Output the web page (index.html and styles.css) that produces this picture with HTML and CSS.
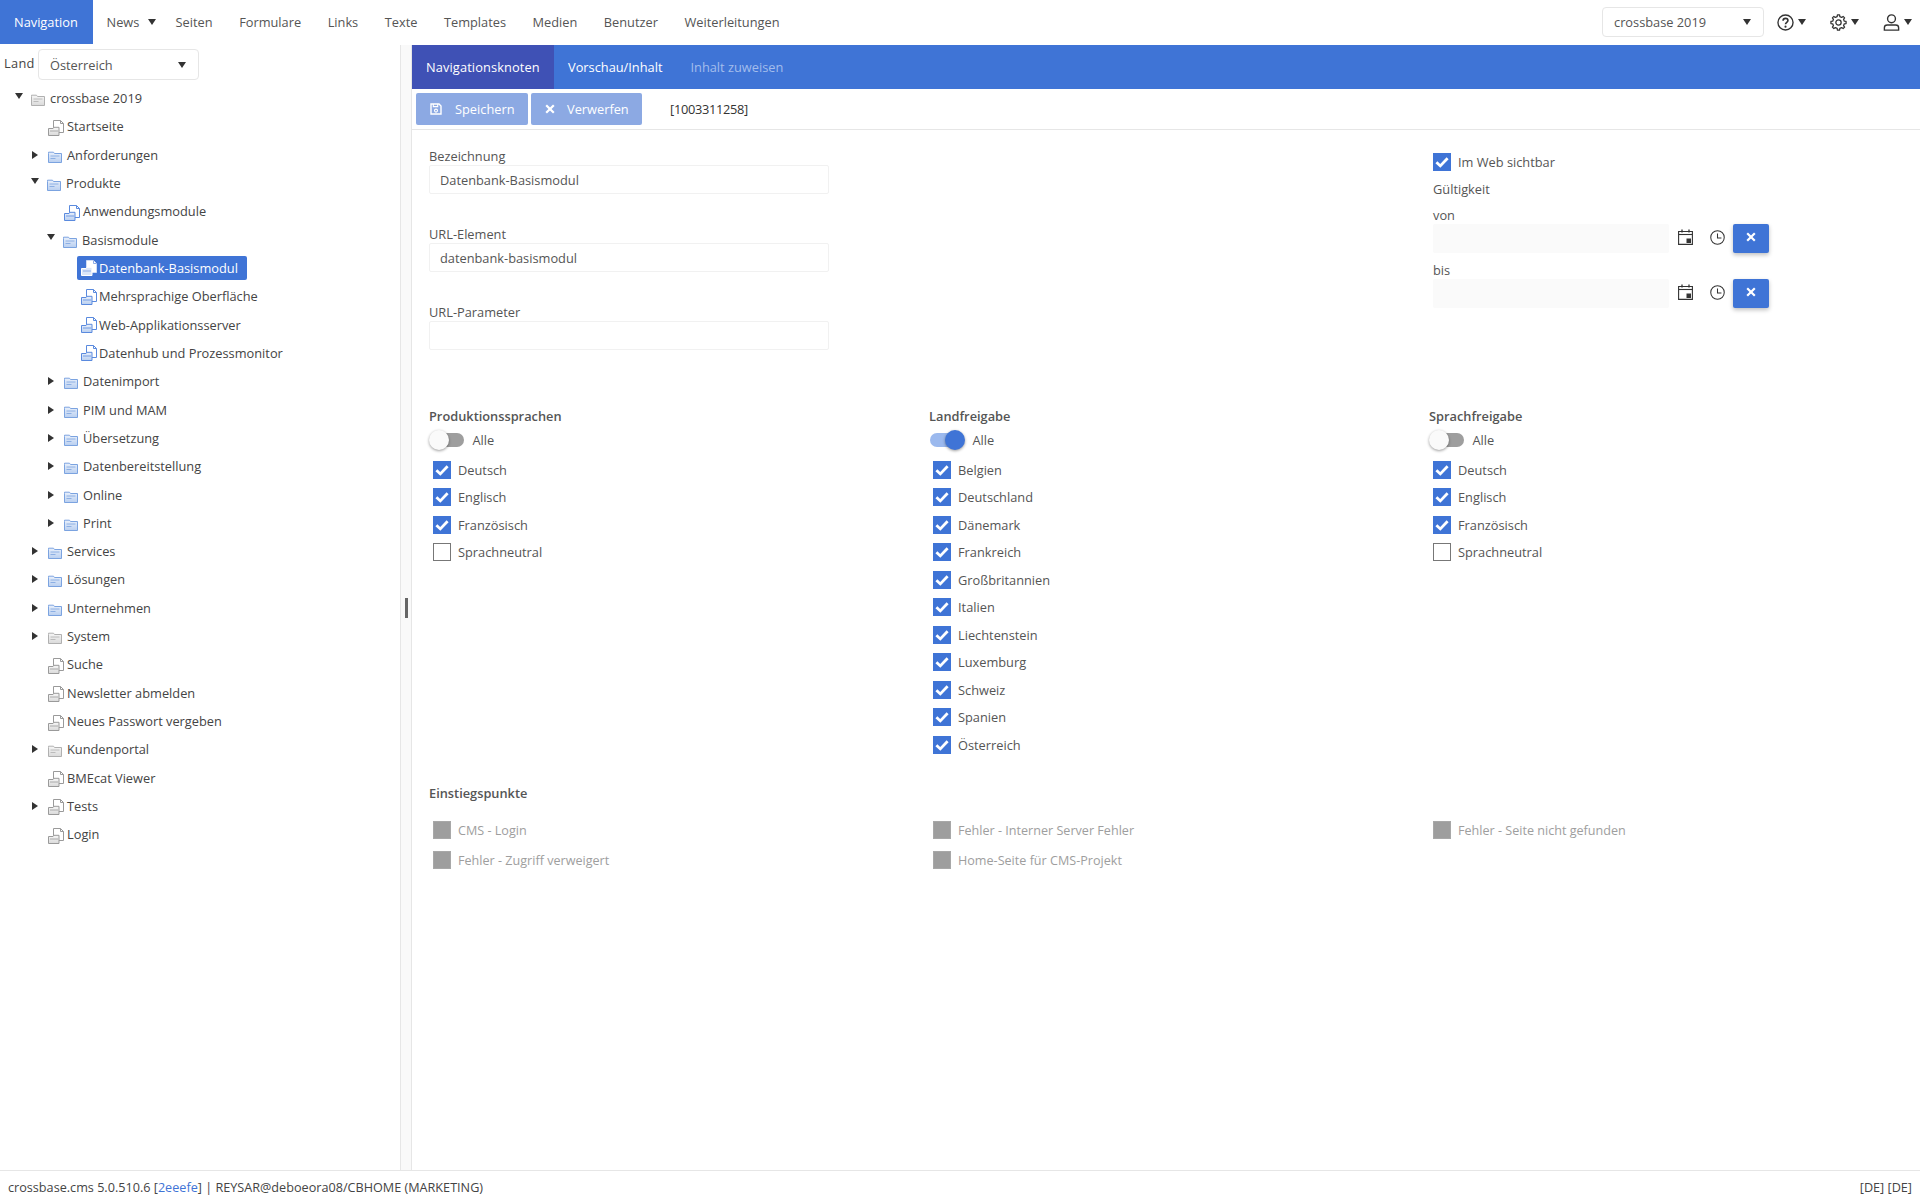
FILE: index.html
```html
<!DOCTYPE html>
<html lang="de">
<head>
<meta charset="utf-8">
<title>crossbase.cms</title>
<link rel="stylesheet" href="styles.css">
</head>
<body>
<svg class="defs" width="0" height="0" aria-hidden="true">
  <defs>
    <linearGradient id="gBlue" x1="0" y1="0" x2="0" y2="1"><stop offset="0" stop-color="#e9f0fb"/><stop offset="1" stop-color="#b9cff0"/></linearGradient>
    <linearGradient id="gGray" x1="0" y1="0" x2="0" y2="1"><stop offset="0" stop-color="#f6f6f6"/><stop offset="1" stop-color="#dadada"/></linearGradient>
    <symbol id="folderBlue" viewBox="0 0 14 12"><path d="M.5 2.500V1.200h5l1 1.300h7v9h-13z" fill="url(#gBlue)" stroke="#7ba3e0"/><path d="M2.500 5h9M2.500 7.500h5" stroke="#7ba3e0" stroke-width=".8"/></symbol>
    <symbol id="folderGray" viewBox="0 0 14 12"><path d="M.5 2.500V1.200h5l1 1.300h7v9h-13z" fill="url(#gGray)" stroke="#b0b0b0"/><path d="M2.500 5h9M2.500 7.500h5" stroke="#b0b0b0" stroke-width=".8"/></symbol>
    <symbol id="pageBlue" viewBox="0 0 16 16"><path d="M5.500.5h7l3 3v9h-10z" fill="#fff" stroke="#5a8ade"/><path d="M12.500.5v3h3" fill="none" stroke="#5a8ade"/><path d="M.5 8.500h4.500l1-1.200h5v8.200H.5z" fill="url(#gBlue)" stroke="#5a8ade"/><path d="M2 11h8" stroke="#5a8ade" stroke-width=".8"/></symbol>
    <symbol id="pageGray" viewBox="0 0 16 16"><path d="M5.500.5h7l3 3v9h-10z" fill="#fff" stroke="#9a9a9a"/><path d="M12.500.5v3h3" fill="none" stroke="#9a9a9a"/><path d="M.5 8.500h4.500l1-1.200h5v8.200H.5z" fill="url(#gGray)" stroke="#9a9a9a"/><path d="M2 11h8" stroke="#9a9a9a" stroke-width=".8"/></symbol>
    <symbol id="pageWhite" viewBox="0 0 16 16"><path d="M5.500.5h7l3 3v9h-10z" fill="#fff" stroke="#cfdcf5"/><path d="M12.500.5v3h3" fill="none" stroke="#8dabe6"/><path d="M.5 8.500h4.500l1-1.200h5v8.200H.5z" fill="#dbe6f8" stroke="#fff"/><path d="M2 11h8" stroke="#7c9fe2" stroke-width=".8"/></symbol>
    <symbol id="check" viewBox="0 0 18 18"><path d="M3.400 9.200l3.900 3.700 7.300-7.600" fill="none" stroke="#fff" stroke-width="2.800"/></symbol>
    <symbol id="calendar" viewBox="0 0 15 16"><path d="M.6 2.500h13.800v12.900H.6z" fill="none" stroke="#333" stroke-width="1.100"/><path d="M.6 5.500h13.800" stroke="#333" stroke-width="1.100"/><path d="M4 .5v3M11 .5v3" stroke="#333" stroke-width="1.300"/><path d="M8.500 9.500h4.500v4.500H8.500z" fill="#333"/></symbol>
    <symbol id="clock" viewBox="0 0 16 16"><circle cx="8" cy="8" r="7.200" fill="none" stroke="#333" stroke-width="1.100"/><path d="M8 3.600V8.600h4.200" fill="none" stroke="#333" stroke-width="1.100"/></symbol>
    <symbol id="times" viewBox="0 0 10 10"><path d="M1.200 1.200l7.600 7.600M8.800 1.200l-7.600 7.600" stroke="#fff" stroke-width="2.200" fill="none"/></symbol>
    <symbol id="save" viewBox="0 0 12 12"><path d="M1 1h8l2 2v8H1z" fill="none" stroke="#fff" stroke-width="1.400"/><path d="M3.300 1v2.600h4.400V1" fill="none" stroke="#fff" stroke-width="1.100"/><circle cx="6" cy="7.600" r="1.500" fill="none" stroke="#fff" stroke-width="1.100"/></symbol>
    <symbol id="help" viewBox="0 0 16 16"><circle cx="8" cy="8" r="7.100" fill="none" stroke="#333" stroke-width="1.300"/><path d="M5.700 6.300c0-1.400 1-2.200 2.300-2.200s2.300.8 2.300 2c0 1.700-2.300 1.800-2.300 3.600" fill="none" stroke="#333" stroke-width="1.500"/><circle cx="8" cy="11.900" r="1" fill="#333"/></symbol>
    <symbol id="gear" viewBox="0 0 16 16"><path d="M6.740 2.550L7 .87H9L9.260 2.550L10.970 3.250L12.330 2.250L13.750 3.670L12.750 5.030L13.450 6.740L15.130 7V9L13.450 9.260L12.750 10.970L13.750 12.330L12.330 13.750L10.970 12.750L9.260 13.450L9 15.130H7L6.740 13.450L5.030 12.750L3.670 13.750L2.250 12.330L3.250 10.970L2.550 9.260L.87 9V7L2.550 6.740L3.250 5.030L2.250 3.670L3.670 2.250L5.030 3.250Z" fill="none" stroke="#333" stroke-width="1.200" stroke-linejoin="round"/><circle cx="8" cy="8" r="2.500" fill="none" stroke="#333" stroke-width="1.200"/></symbol>
    <symbol id="user" viewBox="0 0 16 16"><circle cx="8" cy="4.500" r="3.700" fill="none" stroke="#333" stroke-width="1.300"/><path d="M1.300 15.200v-2.200c0-1.500 1.200-2.600 2.700-2.600h8c1.500 0 2.700 1.100 2.700 2.600v2.200z" fill="none" stroke="#333" stroke-width="1.300"/></symbol>
  </defs>
</svg>

<header class="topbar">
  <nav class="mainnav">
    <a class="navitem active">Navigation</a>
    <a class="navitem has-caret">News<span class="caret-down nav-caret"></span></a>
    <a class="navitem">Seiten</a>
    <a class="navitem">Formulare</a>
    <a class="navitem">Links</a>
    <a class="navitem">Texte</a>
    <a class="navitem">Templates</a>
    <a class="navitem">Medien</a>
    <a class="navitem">Benutzer</a>
    <a class="navitem">Weiterleitungen</a>
  </nav>
  <div class="topright">
    <div class="select project-select"><span>crossbase 2019</span><span class="caret-down"></span></div>
    <div class="topicon"><svg class="icon18"><use href="#help"/></svg><span class="caret-down"></span></div>
    <div class="topicon"><svg class="icon18"><use href="#gear"/></svg><span class="caret-down"></span></div>
    <div class="topicon"><svg class="icon18"><use href="#user"/></svg><span class="caret-down"></span></div>
  </div>
</header>

<div class="workspace">
  <aside class="sidebar">
    <div class="country">
      <span class="country-label">Land</span>
      <div class="select country-select"><span>Österreich</span><span class="caret-down"></span></div>
    </div>
    <ul class="tree">
      <li class="node d0"><span class="caret-down arrow"></span><span class="slot"><svg class="folder"><use href="#folderGray"/></svg></span><span class="label">crossbase 2019</span></li>
      <li class="node d1"><span class="arrow"></span><span class="slot"><svg class="page"><use href="#pageGray"/></svg></span><span class="label">Startseite</span></li>
      <li class="node d1"><span class="caret-right arrow"></span><span class="slot"><svg class="folder"><use href="#folderBlue"/></svg></span><span class="label">Anforderungen</span></li>
      <li class="node d1"><span class="caret-down arrow"></span><span class="slot"><svg class="folder"><use href="#folderBlue"/></svg></span><span class="label">Produkte</span></li>
      <li class="node d2"><span class="arrow"></span><span class="slot"><svg class="page"><use href="#pageBlue"/></svg></span><span class="label">Anwendungsmodule</span></li>
      <li class="node d2"><span class="caret-down arrow"></span><span class="slot"><svg class="folder"><use href="#folderBlue"/></svg></span><span class="label">Basismodule</span></li>
      <li class="node d3"><span class="arrow"></span><span class="selected"><span class="slot"><svg class="page"><use href="#pageWhite"/></svg></span><span class="label">Datenbank-Basismodul</span></span></li>
      <li class="node d3"><span class="arrow"></span><span class="plain"><span class="slot"><svg class="page"><use href="#pageBlue"/></svg></span><span class="label">Mehrsprachige Oberfläche</span></span></li>
      <li class="node d3"><span class="arrow"></span><span class="plain"><span class="slot"><svg class="page"><use href="#pageBlue"/></svg></span><span class="label">Web-Applikationsserver</span></span></li>
      <li class="node d3"><span class="arrow"></span><span class="plain"><span class="slot"><svg class="page"><use href="#pageBlue"/></svg></span><span class="label">Datenhub und Prozessmonitor</span></span></li>
      <li class="node d2"><span class="caret-right arrow"></span><span class="slot"><svg class="folder"><use href="#folderBlue"/></svg></span><span class="label">Datenimport</span></li>
      <li class="node d2"><span class="caret-right arrow"></span><span class="slot"><svg class="folder"><use href="#folderBlue"/></svg></span><span class="label">PIM und MAM</span></li>
      <li class="node d2"><span class="caret-right arrow"></span><span class="slot"><svg class="folder"><use href="#folderBlue"/></svg></span><span class="label">Übersetzung</span></li>
      <li class="node d2"><span class="caret-right arrow"></span><span class="slot"><svg class="folder"><use href="#folderBlue"/></svg></span><span class="label">Datenbereitstellung</span></li>
      <li class="node d2"><span class="caret-right arrow"></span><span class="slot"><svg class="folder"><use href="#folderBlue"/></svg></span><span class="label">Online</span></li>
      <li class="node d2"><span class="caret-right arrow"></span><span class="slot"><svg class="folder"><use href="#folderBlue"/></svg></span><span class="label">Print</span></li>
      <li class="node d1"><span class="caret-right arrow"></span><span class="slot"><svg class="folder"><use href="#folderBlue"/></svg></span><span class="label">Services</span></li>
      <li class="node d1"><span class="caret-right arrow"></span><span class="slot"><svg class="folder"><use href="#folderBlue"/></svg></span><span class="label">Lösungen</span></li>
      <li class="node d1"><span class="caret-right arrow"></span><span class="slot"><svg class="folder"><use href="#folderBlue"/></svg></span><span class="label">Unternehmen</span></li>
      <li class="node d1"><span class="caret-right arrow"></span><span class="slot"><svg class="folder"><use href="#folderGray"/></svg></span><span class="label">System</span></li>
      <li class="node d1"><span class="arrow"></span><span class="slot"><svg class="page"><use href="#pageGray"/></svg></span><span class="label">Suche</span></li>
      <li class="node d1"><span class="arrow"></span><span class="slot"><svg class="page"><use href="#pageGray"/></svg></span><span class="label">Newsletter abmelden</span></li>
      <li class="node d1"><span class="arrow"></span><span class="slot"><svg class="page"><use href="#pageGray"/></svg></span><span class="label">Neues Passwort vergeben</span></li>
      <li class="node d1"><span class="caret-right arrow"></span><span class="slot"><svg class="folder"><use href="#folderGray"/></svg></span><span class="label">Kundenportal</span></li>
      <li class="node d1"><span class="arrow"></span><span class="slot"><svg class="page"><use href="#pageGray"/></svg></span><span class="label">BMEcat Viewer</span></li>
      <li class="node d1"><span class="caret-right arrow"></span><span class="slot"><svg class="page"><use href="#pageGray"/></svg></span><span class="label">Tests</span></li>
      <li class="node d1"><span class="arrow"></span><span class="slot"><svg class="page"><use href="#pageGray"/></svg></span><span class="label">Login</span></li>
    </ul>
  </aside>

  <div class="splitter"><span class="grip"></span></div>

  <main class="content">
    <div class="tabs">
      <a class="tab current">Navigationsknoten</a>
      <a class="tab">Vorschau/Inhalt</a>
      <a class="tab muted">Inhalt zuweisen</a>
    </div>
    <div class="toolbar">
      <button class="btn" type="button"><svg class="btn-icon"><use href="#save"/></svg>Speichern</button>
      <button class="btn" type="button"><svg class="btn-icon x"><use href="#times"/></svg>Verwerfen</button>
      <span class="record-id">[1003311258]</span>
    </div>

    <form class="form">
      <section class="top-fields">
        <div class="fields-left">
          <label class="field"><span class="field-label">Bezeichnung</span><input class="text-input" value="Datenbank-Basismodul"></label>
          <label class="field"><span class="field-label">URL-Element</span><input class="text-input" value="datenbank-basismodul"></label>
          <label class="field"><span class="field-label">URL-Parameter</span><input class="text-input" value=""></label>
        </div>
        <div class="fields-right">
          <div class="check first"><span class="box on"><svg><use href="#check"/></svg></span>Im Web sichtbar</div>
          <div class="valid-title">Gültigkeit</div>
          <div class="date-label">von</div>
          <div class="date-row"><span class="date-input"></span><svg class="dicon"><use href="#calendar"/></svg><svg class="dicon clock"><use href="#clock"/></svg><button class="clear" type="button"><svg><use href="#times"/></svg></button></div>
          <div class="date-label">bis</div>
          <div class="date-row"><span class="date-input"></span><svg class="dicon"><use href="#calendar"/></svg><svg class="dicon clock"><use href="#clock"/></svg><button class="clear" type="button"><svg><use href="#times"/></svg></button></div>
        </div>
      </section>

      <section class="groups">
        <div class="group">
          <h3 class="group-title">Produktionssprachen</h3>
          <div class="toggle-row"><span class="toggle"><span class="knob"></span></span>Alle</div>
          <div class="check"><span class="box on"><svg><use href="#check"/></svg></span>Deutsch</div>
          <div class="check"><span class="box on"><svg><use href="#check"/></svg></span>Englisch</div>
          <div class="check"><span class="box on"><svg><use href="#check"/></svg></span>Französisch</div>
          <div class="check"><span class="box"></span>Sprachneutral</div>
        </div>
        <div class="group">
          <h3 class="group-title">Landfreigabe</h3>
          <div class="toggle-row"><span class="toggle on"><span class="knob"></span></span>Alle</div>
          <div class="check"><span class="box on"><svg><use href="#check"/></svg></span>Belgien</div>
          <div class="check"><span class="box on"><svg><use href="#check"/></svg></span>Deutschland</div>
          <div class="check"><span class="box on"><svg><use href="#check"/></svg></span>Dänemark</div>
          <div class="check"><span class="box on"><svg><use href="#check"/></svg></span>Frankreich</div>
          <div class="check"><span class="box on"><svg><use href="#check"/></svg></span>Großbritannien</div>
          <div class="check"><span class="box on"><svg><use href="#check"/></svg></span>Italien</div>
          <div class="check"><span class="box on"><svg><use href="#check"/></svg></span>Liechtenstein</div>
          <div class="check"><span class="box on"><svg><use href="#check"/></svg></span>Luxemburg</div>
          <div class="check"><span class="box on"><svg><use href="#check"/></svg></span>Schweiz</div>
          <div class="check"><span class="box on"><svg><use href="#check"/></svg></span>Spanien</div>
          <div class="check"><span class="box on"><svg><use href="#check"/></svg></span>Österreich</div>
        </div>
        <div class="group">
          <h3 class="group-title">Sprachfreigabe</h3>
          <div class="toggle-row"><span class="toggle"><span class="knob"></span></span>Alle</div>
          <div class="check"><span class="box on"><svg><use href="#check"/></svg></span>Deutsch</div>
          <div class="check"><span class="box on"><svg><use href="#check"/></svg></span>Englisch</div>
          <div class="check"><span class="box on"><svg><use href="#check"/></svg></span>Französisch</div>
          <div class="check"><span class="box"></span>Sprachneutral</div>
        </div>
      </section>

      <section class="entry">
        <h3 class="group-title">Einstiegspunkte</h3>
        <div class="entry-grid">
          <div class="check off"><span class="box dis"></span>CMS - Login</div>
          <div class="check off"><span class="box dis"></span>Fehler - Interner Server Fehler</div>
          <div class="check off"><span class="box dis"></span>Fehler - Seite nicht gefunden</div>
          <div class="check off"><span class="box dis"></span>Fehler - Zugriff verweigert</div>
          <div class="check off"><span class="box dis"></span>Home-Seite für CMS-Projekt</div>
        </div>
      </section>
    </form>
  </main>
</div>

<footer class="footer">
  <span>crossbase.cms 5.0.510.6 [<a class="hash">2eeefe</a>] | REYSAR@deboeora08/CBHOME (MARKETING)</span>
  <span>[DE] [DE]</span>
</footer>
</body>
</html>
```
FILE: styles.css
```css
* { box-sizing: border-box; }
html, body { margin: 0; height: 100%; }
body {
  width: 1920px; height: 1200px; overflow: hidden;
  display: flex; flex-direction: column;
  font-family: "Open Sans", "Liberation Sans", sans-serif;
  font-size: 12.8px; color: #444; background: #fff;
}
.defs { position: absolute; }
a { color: inherit; text-decoration: none; }
ul { list-style: none; margin: 0; padding: 0; }
svg { flex: none; }

.caret-down { display: inline-block; flex: none; width: 0; height: 0; border-left: 4.5px solid transparent; border-right: 4.5px solid transparent; border-top: 6px solid #333; }
.caret-right { display: inline-block; flex: none; width: 0; height: 0; border-top: 4.5px solid transparent; border-bottom: 4.5px solid transparent; border-left: 6px solid #333; }

.topbar { height: 45px; flex: none; display: flex; justify-content: space-between; align-items: flex-start; }
.mainnav { display: flex; }
.navitem { height: 44px; padding: 0 13.25px; display: flex; align-items: center; color: #555; white-space: nowrap; }
.navitem.active { background: #3f74d6; color: #fff; padding: 0 14px; width: 93px; }
.nav-caret { margin-left: 9px; margin-right: -7px; }
.has-caret { padding-left: 13.5px; padding-right: 13px; }
.topright { display: flex; align-items: flex-start; height: 44px; padding-top: 7px; }
.select { border: 1px solid #e6e6e6; border-radius: 4px; background: #fff; display: flex; align-items: center; justify-content: space-between; color: #555; }
.project-select { width: 162px; height: 30px; padding: 0 12px 0 11px; margin-right: 13px; }
.topicon { display: flex; align-items: center; width: 53px; height: 30px; gap: 4px; }
.topicon:last-child { width: 37px; }
.icon18 { width: 17px; height: 17px; }

.workspace { flex: 1; display: flex; min-height: 0; }
.sidebar { width: 400px; flex: none; }
.country { display: flex; align-items: flex-start; height: 39px; padding: 4px 0 0 4px; }
.country-label { width: 34px; color: #444; font-weight: 500; line-height: 28px; letter-spacing: .3px; }
.country-select { width: 161px; height: 31px; padding: 0 12px 0 11px; }

.node { height: 28.32px; display: flex; align-items: center; color: #444; white-space: nowrap; }
.d0 { padding-left: 11px; }
.d1 { padding-left: 27px; }
.d2 { padding-left: 43px; }
.d3 { padding-left: 59px; }
.arrow { flex: none; width: 21px; }
.caret-right.arrow { width: 0; margin-left: 5px; margin-right: 10px; }
.caret-down.arrow { width: 0; margin-left: 3.5px; margin-right: 8.5px; margin-top: -5px; }
.slot { width: 16px; flex: none; margin-right: 3px; display: flex; }
.folder { width: 14px; height: 12px; margin-top: 4px; }
.page { width: 16px; height: 16px; margin-top: 3px; }
.label { line-height: 20px; }
.selected, .plain { display: flex; align-items: center; height: 24px; padding: 0 8px 0 4px; margin-left: -3px; border-radius: 2px; }
.selected .slot, .plain .slot { margin-right: 2px; }
.selected { background: #3f74d6; color: #fff; width: 170px; }
.selected .page { margin-top: 0; }
.plain .page { margin-top: 1px; }

.splitter { width: 12px; flex: none; background: #f9f9f9; border-left: 1px solid #e6e6e6; border-right: 1px solid #e6e6e6; display: flex; align-items: center; justify-content: center; }
.grip { width: 3px; height: 20px; background: #666; margin-top: 1px; }

.content { flex: 1; min-width: 0; }
.tabs { height: 44px; background: #3f74d6; display: flex; }
.tab { padding: 0 14px; display: flex; align-items: center; color: #fff; font-weight: 500; }
.tab.current { background: #3f51b5; width: 142px; letter-spacing: .12px; }
.tab.muted { color: #a3bdec; }
.toolbar { height: 41px; border-bottom: 1px solid #e6e6e6; display: flex; align-items: center; padding: 0 0 1px 4px; }
.btn { width: 111px; height: 32px; border: 0; border-radius: 2px; background: #8ca9e3; color: #fff; font: 500 12.8px "Open Sans", "Liberation Sans", sans-serif; display: flex; align-items: center; padding: 0 0 0 14px; margin-right: 4px; }
.btn:first-child { width: 112px; margin-right: 3px; }
.btn-icon { width: 12px; height: 12px; margin-right: 13px; }
.btn-icon.x { width: 10px; height: 10px; margin-right: 12px; }
.record-id { margin-left: 24px; color: #333; letter-spacing: -.3px; }

.form { padding: 0 0 0 17px; }
.top-fields { display: flex; height: 276px; }
.fields-left { width: 400px; margin-right: 604px; padding-top: 16px; }
.field { display: block; height: 78px; }
.field-label { display: block; line-height: 20px; height: 19px; color: #555; }
.text-input { display: block; width: 400px; height: 29px; border: 1px solid #f1f1f1; border-radius: 2px; padding: 0 10px; font: 12.8px "Open Sans", "Liberation Sans", sans-serif; color: #555; background: #fff; outline: 0; }
.fields-right { width: 340px; padding-top: 22px; }
.valid-title { line-height: 20px; margin-top: 8px; color: #555; }
.date-label { line-height: 20px; margin-top: 6px; height: 19px; color: #555; }
.date-row { display: flex; align-items: center; height: 29px; margin-bottom: 7px; }
.date-input { width: 236px; height: 29px; background: #fafafa; border-radius: 2px; }
.dicon { width: 15px; height: 16px; margin-left: 9px; margin-top: -3px; }
.dicon.clock { width: 15px; height: 15px; margin-left: 17px; margin-top: -3px; }
.clear { width: 36px; height: 29px; margin-left: 8px; border: 0; border-radius: 2px; background: #3f74d6; box-shadow: 0 2px 4px rgba(0,0,0,.25); display: flex; align-items: center; justify-content: center; padding: 0; }
.clear svg { width: 10px; height: 10px; margin-top: -3px; }

.check { display: flex; align-items: center; height: 27.5px; padding-left: 4px; color: #555; white-space: nowrap; }
.check.first { padding-left: 0; height: 19px; }
.box { width: 18px; height: 18px; flex: none; margin-right: 7px; border: 1px solid #777; background: #fff; }
.box.on { border: 0; background: #3f74d6; }
.box svg { width: 18px; height: 18px; display: block; }
.box.dis { background: #9e9e9e; border-color: #a8a8a8; }
.check.off { color: #9e9e9e; height: 30px; font-size: 12.6px; }

.groups { display: grid; grid-template-columns: 500px 500px 500px; height: 377px; }
.group-title { margin: 0; font-size: 12.8px; font-weight: 600; line-height: 20px; color: #555; height: 23px; }
.toggle-row { display: flex; align-items: center; height: 22px; margin-bottom: 5px; color: #555; }
.toggle { position: relative; width: 34px; height: 14px; border-radius: 7px; background: #9e9e9e; margin-right: 8.5px; margin-left: 1px; }
.toggle.on { background: #9bb9ee; }
.knob { position: absolute; left: -1px; top: -3px; width: 20px; height: 20px; border-radius: 50%; background: #fafafa; box-shadow: 0 1px 3px rgba(0,0,0,.4); }
.toggle.on .knob { left: 15px; background: #3f74d6; }

.entry .group-title { height: 20px; }
.entry-grid { display: grid; grid-template-columns: 500px 500px 500px; margin-top: 12px; }

.footer { height: 30px; flex: none; border-top: 1px solid #e6e6e6; display: flex; justify-content: space-between; align-items: center; padding: 2px 8px 0; color: #444; font-size: 12.65px; }
.hash { color: #3f74d6; }
```
